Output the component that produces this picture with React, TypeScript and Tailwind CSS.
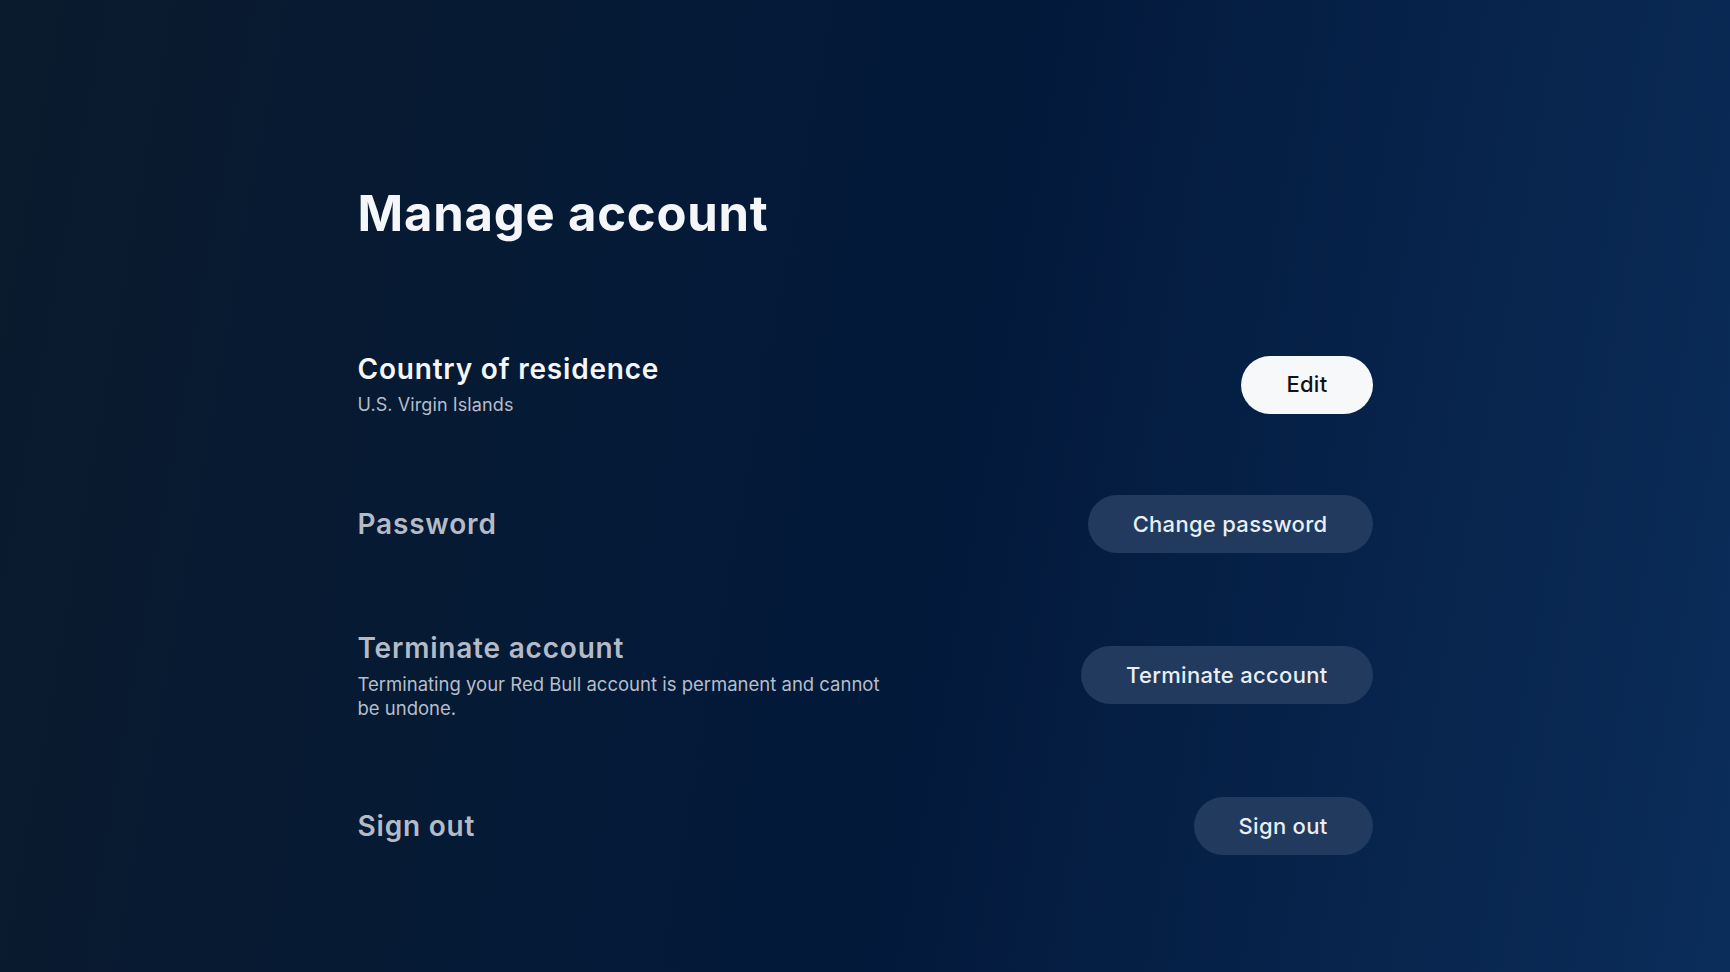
import React from "react";

const font = { fontFamily: "Inter, 'Noto Sans', sans-serif" };

function Row({
  title,
  sub,
  active,
  button,
  primary,
}: {
  title: string;
  sub?: React.ReactNode;
  active?: boolean;
  button: string;
  primary?: boolean;
}) {
  return (
    <div className="flex items-center justify-between">
      <div className="flex flex-col">
        <div
          className={`text-[28px] leading-[36px] font-semibold tracking-[0.8px] ${
            active ? "text-[#f4f6f9]" : "text-[#b4bbc6]"
          }`}
        >
          {title}
        </div>
        {sub}
      </div>
      <button
        className={`h-[58px] rounded-full px-[45px] text-[22px] font-medium tracking-[0.3px] ${
          primary ? "bg-[#f7f8fa] text-[#111318]" : "bg-[#213a5d] text-[#e9eef4]"
        }`}
      >
        {button}
      </button>
    </div>
  );
}

export default function App() {
  return (
    <div
      style={font}
      className="w-full h-[972px] overflow-hidden bg-[linear-gradient(100deg,#0b1a2d_0%,#051a36_35%,#03193b_55%,#0b2d5a_100%)]"
    >
      <div className="mx-auto w-[1015px] pt-[185px]">
        <h1 className="text-[49px] leading-[58px] font-bold text-[#f4f6f9] tracking-[0.8px]">
          Manage account
        </h1>
        <div className="mt-[108px] flex flex-col gap-[77px]">
          <Row
            title="Country of residence"
            active
            primary
            button="Edit"
            sub={
              <div className="mt-[5px] text-[18px] leading-[26px] text-[#b6bec9] tracking-[0.1px]">
                U.S. Virgin Islands
              </div>
            }
          />
          <Row title="Password" button="Change password" />
          <Row
            title="Terminate account"
            button="Terminate account"
            sub={
              <div className="mt-[6px] w-[535px] text-[18.5px] leading-[24px] text-[#b6bec9]">
                Terminating your Red Bull account is permanent and cannot be undone.
              </div>
            }
          />
          <Row title="Sign out" button="Sign out" />
        </div>
      </div>
    </div>
  );
}
